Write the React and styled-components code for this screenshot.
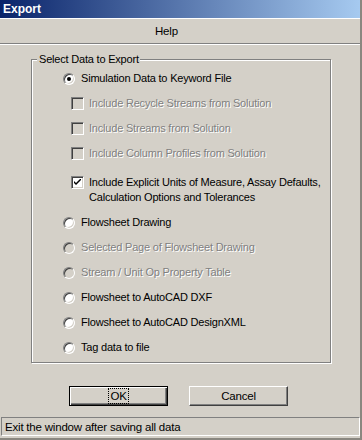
import React from 'react';
import styled, { createGlobalStyle } from 'styled-components';

const GlobalStyle = createGlobalStyle`
  html, body {
    margin: 0;
    padding: 0;
    background: #d4d0c8;
  }
  * {
    box-sizing: border-box;
  }
`

const Window = styled.div`
  width: 362px;
  height: 440px;
  background: #d4d0c8;
  display: flex;
  flex-direction: column;
  font-family: "Liberation Sans", Arial, sans-serif;
  font-size: 11px;
  letter-spacing: -0.2px;
  color: #000;
  border-right: 2px solid #8a8780;
  border-bottom: 2px solid #8a8780;
  overflow: hidden;
`

const TitleBar = styled.div`
  height: 19px;
  flex: none;
  display: flex;
  align-items: center;
  padding-left: 3px;
  background: linear-gradient(to right, #0a246a, #a6caf0);
  color: #fff;
  font-weight: bold;
  font-size: 12px;
  letter-spacing: 0;
  border-bottom: 1px solid #fff;
`

const MenuBar = styled.div`
  height: 25px;
  flex: none;
  display: flex;
  align-items: center;
  padding-left: 155px;
  border-bottom: 1px solid #808080;
  box-shadow: 0 1px 0 #fff;
`

const MenuItem = styled.span`
  font-size: 11.5px;
`

const Body = styled.div`
  flex: 1;
  display: flex;
  flex-direction: column;
  padding-top: 15px;
`

const Group = styled.div`
  position: relative;
  margin-left: 31px;
  width: 300px;
  height: 304px;
  border: 1px solid #808080;
  box-shadow: inset 1px 1px 0 #fff, 1px 1px 0 #fff;
  padding-top: 6px;
  padding-bottom: 2px;
  display: flex;
  flex-direction: column;
`

const Legend = styled.span`
  position: absolute;
  top: -8px;
  left: 5px;
  padding: 0 1px 0 2px;
  background: #d4d0c8;
  line-height: 15px;
`

const Row = styled.div`
  display: flex;
  align-items: ${p => (p.$multi ? 'flex-start' : 'center')};
  height: ${p => (p.$multi ? 44 : 25)}px;
  padding-left: ${p => (p.$indent ? 39 : 31)}px;
  padding-top: ${p => (p.$multi ? 9 : 0)}px;
  flex: none;
`

const Label = styled.span`
  line-height: 15px;
  color: ${p => (p.$disabled ? '#808080' : '#000')};
  text-shadow: ${p => (p.$disabled ? '1px 1px 0 #fff' : 'none')};
`

const RadioCircle = styled.span`
  position: relative;
  width: 12px;
  height: 12px;
  flex: none;
  margin-right: 6px;
  border-radius: 50%;
  border: 1px solid;
  border-color: #808080 #fff #fff #808080;
  background: ${p => (p.$disabled ? '#d4d0c8' : '#fff')};
  box-shadow: inset 1px 1px 0 #404040, inset -1px -1px 0 #d4d0c8;

  &::after {
    content: '';
    display: ${p => (p.$checked ? 'block' : 'none')};
    position: absolute;
    left: 3px;
    top: 3px;
    width: 4px;
    height: 4px;
    border-radius: 50%;
    background: #000;
  }
`

const CheckBox = styled.span`
  width: 13px;
  height: 13px;
  flex: none;
  margin-right: 5px;
  margin-top: ${p => (p.$multi ? 1 : 0)}px;
  border: 1px solid;
  border-color: #808080 #fff #fff #808080;
  background: ${p => (p.$disabled ? '#d4d0c8' : '#fff')};
  box-shadow: inset 1px 1px 0 #404040, inset -1px -1px 0 #d4d0c8;
  display: flex;
  align-items: center;
  justify-content: center;
`

const Buttons = styled.div`
  display: flex;
  gap: 21px;
  padding-left: 69px;
  margin-top: 23px;
`

const Button = styled.div`
  width: 99px;
  height: 20px;
  display: flex;
  align-items: center;
  justify-content: center;
  background: #d4d0c8;
  font-size: 11.5px;
  border: 1px solid;
  border-color: ${p => (p.$default ? '#000' : '#fff #404040 #404040 #fff')};
  box-shadow: ${p => (p.$default
    ? 'inset 1px 1px 0 #fff, inset -1px -1px 0 #404040, inset -2px -2px 0 #808080'
    : 'inset -1px -1px 0 #808080')};
`

const FocusText = styled.span`
  outline: 1px dotted #000;
  outline-offset: 0;
  padding: 0 1px;
  line-height: 14px;
`

const StatusBar = styled.div`
  height: 19px;
  margin: 0 0 2px 1px;
  display: flex;
  align-items: center;
  padding-left: 3px;
  border: 1px solid;
  border-color: #808080 #fff #fff #808080;
  font-size: 11.5px;
`

const Radio = ({ checked, disabled, children }) => (
  <Row>
    <RadioCircle $checked={checked} $disabled={disabled} />
    <Label $disabled={disabled}>{children}</Label>
  </Row>
);

const Check = ({ checked, disabled, multi, children }) => (
  <Row $indent $multi={multi}>
    <CheckBox $disabled={disabled} $multi={multi}>
      {checked &&
        <svg width="7" height="7" viewBox="0 0 7 7">
          <path d="M0 2 L0 4 L2 6 L7 1 L7 -1 L2 4 Z" fill="#000" />
        </svg>
      }
    </CheckBox>
    <Label $disabled={disabled}>{children}</Label>
  </Row>
);

const App = () => {
  return (
    <Window>
      <GlobalStyle />
      <TitleBar>Export</TitleBar>
      <MenuBar>
        <MenuItem>Help</MenuItem>
      </MenuBar>
      <Body>
        <Group>
          <Legend>Select Data to Export</Legend>
          <Radio checked>Simulation Data to Keyword File</Radio>
          <Check disabled>Include Recycle Streams from Solution</Check>
          <Check disabled>Include Streams from Solution</Check>
          <Check disabled>Include Column Profiles from Solution</Check>
          <Check checked multi>
            Include Explicit Units of Measure, Assay Defaults,<br />
            Calculation Options and Tolerances
          </Check>
          <Radio>Flowsheet Drawing</Radio>
          <Radio disabled>Selected Page of Flowsheet Drawing</Radio>
          <Radio disabled>Stream / Unit Op Property Table</Radio>
          <Radio>Flowsheet to AutoCAD DXF</Radio>
          <Radio>Flowsheet to AutoCAD DesignXML</Radio>
          <Radio>Tag data to file</Radio>
        </Group>
        <Buttons>
          <Button $default><FocusText>OK</FocusText></Button>
          <Button>Cancel</Button>
        </Buttons>
      </Body>
      <StatusBar>Exit the window after saving all data</StatusBar>
    </Window>
  );
}
export default App;
